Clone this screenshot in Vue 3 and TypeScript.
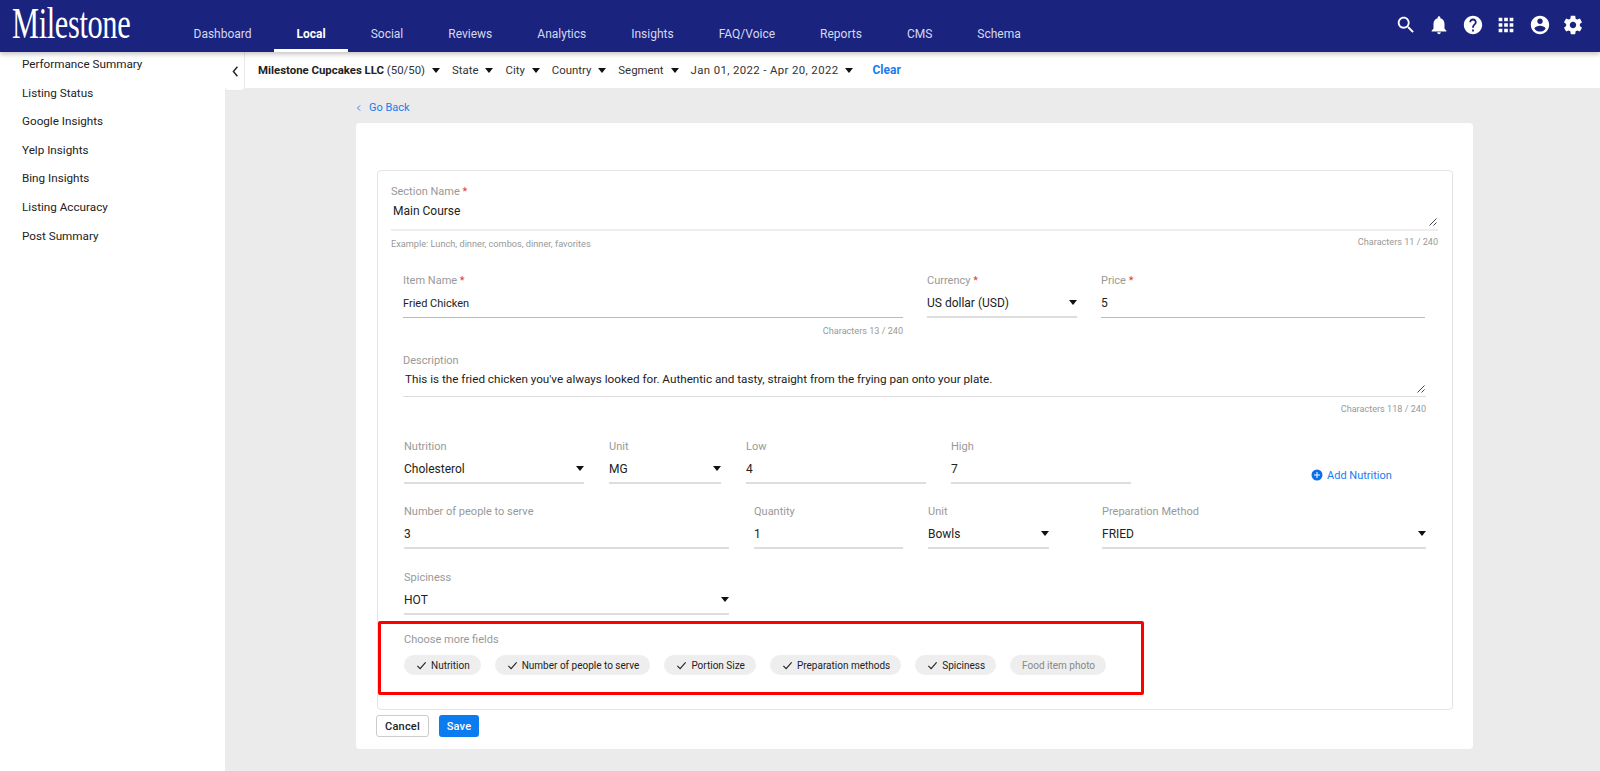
<script setup lang="ts">
const nav = ['Dashboard','Local','Social','Reviews','Analytics','Insights','FAQ/Voice','Reports','CMS','Schema']
const side = ['Performance Summary','Listing Status','Google Insights','Yelp Insights','Bing Insights','Listing Accuracy','Post Summary']
const filters = ['State','City','Country','Segment']
const icons: string[] = [
'M15.5 14h-.79l-.28-.27C15.41 12.59 16 11.11 16 9.5 16 5.91 13.09 3 9.5 3S3 5.91 3 9.5 5.91 16 9.5 16c1.61 0 3.09-.59 4.23-1.57l.27.28v.79l5 4.99L20.49 19l-4.99-5zm-6 0C7.01 14 5 11.99 5 9.5S7.01 5 9.5 5 14 7.01 14 9.5 11.99 14 9.5 14z',
'M12 22c1.1 0 2-.9 2-2h-4c0 1.1.89 2 2 2zm6-6v-5c0-3.07-1.64-5.64-4.5-6.32V4c0-.83-.67-1.5-1.5-1.5s-1.5.67-1.5 1.5v.68C7.63 5.36 6 7.92 6 11v5l-2 2v1h16v-1l-2-2z',
'M12 2C6.48 2 2 6.48 2 12s4.48 10 10 10 10-4.48 10-10S17.52 2 12 2zm1 17h-2v-2h2v2zm2.07-7.75l-.9.92C13.45 12.9 13 13.5 13 15h-2v-.5c0-1.1.45-2.1 1.17-2.83l1.24-1.26c.37-.36.59-.86.59-1.41 0-1.1-.9-2-2-2s-2 .9-2 2H8c0-2.21 1.79-4 4-4s4 1.79 4 4c0 .88-.36 1.68-.93 2.25z',
'M4 8h4V4H4v4zm6 12h4v-4h-4v4zm-6 0h4v-4H4v4zm0-6h4v-4H4v4zm6 0h4v-4h-4v4zm6-10v4h4V4h-4zm-6 4h4V4h-4v4zm6 6h4v-4h-4v4zm0 6h4v-4h-4v4z',
'M12 2C6.48 2 2 6.48 2 12s4.48 10 10 10 10-4.48 10-10S17.52 2 12 2zm0 3c1.66 0 3 1.34 3 3s-1.34 3-3 3-3-1.34-3-3 1.34-3 3-3zm0 14.2c-2.5 0-4.71-1.28-6-3.22.03-1.99 4-3.08 6-3.08 1.99 0 5.97 1.09 6 3.08-1.29 1.94-3.5 3.22-6 3.22z',
'M19.43 12.98c.04-.32.07-.64.07-.98s-.03-.66-.07-.98l2.11-1.65c.19-.15.24-.42.12-.64l-2-3.46c-.12-.22-.39-.3-.61-.22l-2.49 1c-.52-.4-1.08-.73-1.69-.98l-.38-2.65C14.46 2.18 14.25 2 14 2h-4c-.25 0-.46.18-.49.42l-.38 2.65c-.61.25-1.17.59-1.69.98l-2.49-1c-.23-.09-.49 0-.61.22l-2 3.46c-.13.22-.07.49.12.64l2.11 1.65c-.04.32-.07.65-.07.98s.03.66.07.98l-2.11 1.65c-.19.15-.24.42-.12.64l2 3.46c.12.22.39.3.61.22l2.49-1c.52.4 1.08.73 1.69.98l.38 2.65c.03.24.24.42.49.42h4c.25 0 .46-.18.49-.42l.38-2.65c.61-.25 1.17-.59 1.69-.98l2.49 1c.23.09.49 0 .61-.22l2-3.46c.12-.22.07-.49-.12-.64l-2.11-1.65zM12 15.5c-1.93 0-3.5-1.57-3.5-3.5s1.57-3.5 3.5-3.5 3.5 1.57 3.5 3.5-1.57 3.5-3.5 3.5z'
]
interface Field { label: string; value: string; select?: boolean }
const nutrition: Field[] = [
  { label: 'Nutrition', value: 'Cholesterol', select: true },
  { label: 'Unit', value: 'MG', select: true },
  { label: 'Low', value: '4' },
  { label: 'High', value: '7' }
]
const people: Field[] = [
  { label: 'Number of people to serve', value: '3' },
  { label: 'Quantity', value: '1' },
  { label: 'Unit', value: 'Bowls', select: true },
  { label: 'Preparation Method', value: 'FRIED', select: true }
]
const chips = [
  { t: 'Nutrition', on: true },
  { t: 'Number of people to serve', on: true },
  { t: 'Portion Size', on: true },
  { t: 'Preparation methods', on: true },
  { t: 'Spiciness', on: true },
  { t: 'Food item photo', on: false }
]
</script>

<template>
  <div class="app">
    <header class="top">
      <div class="logo">Milestone</div>
      <nav class="nav">
        <a v-for="n in nav" :key="n" class="nav-item" :class="{ active: n === 'Local' }">{{ n }}</a>
      </nav>
      <div class="icons">
        <svg v-for="(d, i) in icons" :key="i" viewBox="0 0 24 24" class="top-icon"><path :d="d" /></svg>
      </div>
    </header>
    <div class="body">
      <aside class="side">
        <a v-for="s in side" :key="s" class="side-item">{{ s }}</a>
      </aside>
      <main class="main">
        <div class="filters">
          <div class="collapse">
            <svg viewBox="0 0 10 16" width="8" height="13"><path d="M8 2 L3 8 L8 14" fill="none" stroke="#222" stroke-width="1.8" /></svg>
          </div>
          <span class="f-text org"><b>Milestone Cupcakes LLC</b> (50/50)</span><i class="caret f-caret"></i>
          <template v-for="f in filters" :key="f">
            <span class="f-text">{{ f }}</span><i class="caret f-caret"></i>
          </template>
          <span class="f-text date">Jan 01, 2022 - Apr 20, 2022</span><i class="caret f-caret"></i>
          <a class="clear">Clear</a>
        </div>
        <div class="content">
          <a class="back"><svg viewBox="0 0 8 10" width="6" height="8"><path d="M5.5 1.5 L2 5 L5.5 8.5" fill="none" stroke="#1a7cf0" stroke-width="1.2" /></svg>Go Back</a>
          <section class="card">
            <div class="panel">
              <div class="section">
                <div class="label">Section Name <em>*</em></div>
                <div class="area">Main Course<svg class="grip" viewBox="0 0 8 8" width="8" height="8"><path d="M0.5 7.5 L7.5 0.5 M4.5 7.5 L7.5 4.5" stroke="#444" stroke-width="1" /></svg></div>
                <div class="hints"><span>Example: Lunch, dinner, combos, dinner, favorites</span><span class="count">Characters 11 / 240</span></div>
              </div>
              <div class="inner">
                <div class="row row-item">
                  <div class="field">
                    <div class="label">Item Name <em>*</em></div>
                    <div class="value dark small">Fried Chicken</div>
                    <div class="count tail tail-item">Characters 13 / 240</div>
                  </div>
                  <div class="field">
                    <div class="label">Currency <em>*</em></div>
                    <div class="value">US dollar (USD)<i class="caret"></i></div>
                  </div>
                  <div class="field">
                    <div class="label">Price <em>*</em></div>
                    <div class="value dark">5</div>
                  </div>
                </div>
                <div class="desc">
                  <div class="label">Description</div>
                  <div class="desc-area">This is the fried chicken you've always looked for. Authentic and tasty, straight from the frying pan onto your plate.<svg class="grip" viewBox="0 0 8 8" width="8" height="8"><path d="M0.5 7.5 L7.5 0.5 M4.5 7.5 L7.5 4.5" stroke="#444" stroke-width="1" /></svg></div>
                  <div class="count tail tail-desc">Characters 118 / 240</div>
                </div>
                <div class="row row-nutrition">
                  <div v-for="f in nutrition" :key="f.label" class="field">
                    <div class="label">{{ f.label }}</div>
                    <div class="value">{{ f.value }}<i v-if="f.select" class="caret"></i></div>
                  </div>
                  <a class="add">
                    <svg viewBox="0 0 24 24" width="12" height="12"><path fill="#0b6fe8" d="M12 1a11 11 0 1 0 0 22 11 11 0 0 0 0-22zm6 12h-5v5h-2v-5H6v-2h5V6h2v5h5v2z" /></svg>
                    Add Nutrition
                  </a>
                </div>
                <div class="row row-people">
                  <div v-for="f in people" :key="f.label" class="field">
                    <div class="label">{{ f.label }}</div>
                    <div class="value">{{ f.value }}<i v-if="f.select" class="caret"></i></div>
                  </div>
                </div>
                <div class="row row-spice">
                  <div class="field">
                    <div class="label">Spiciness</div>
                    <div class="value">HOT<i class="caret"></i></div>
                  </div>
                </div>
              </div>
              <div class="more">
                <div class="label">Choose more fields</div>
                <div class="chips">
                  <span v-for="c in chips" :key="c.t" class="chip" :class="{ off: !c.on }">
                    <svg v-if="c.on" viewBox="0 0 12 12" width="11" height="11"><path d="M1.5 6.5 L4.5 9.5 L10.5 2.5" fill="none" stroke="#222" stroke-width="1.2" /></svg>
                    {{ c.t }}
                  </span>
                </div>
              </div>
            </div>
            <div class="actions">
              <button class="btn cancel">Cancel</button>
              <button class="btn save">Save</button>
            </div>
          </section>
        </div>
      </main>
    </div>
  </div>
</template>

<style>
html, body { margin: 0; background: #ebebeb; }
</style>

<style scoped>
.app { width: 1600px; height: 771px; overflow: hidden; display: flex; flex-direction: column; font-family: Roboto, "Liberation Sans", sans-serif; color: #222; background: #ebebeb; }
.top { height: 52px; flex: none; background: #1a237e; display: flex; align-items: stretch; box-shadow: 0 2px 5px rgba(0,0,0,.25); position: relative; z-index: 3; }
.logo { width: 171px; flex: none; padding-left: 12px; box-sizing: border-box; font-family: "Liberation Serif", serif; color: #fff; font-size: 44px; line-height: 48px; transform: scaleX(.69); transform-origin: 12px 0; white-space: nowrap; letter-spacing: -.5px; }
.nav { display: flex; align-items: stretch; }
.nav-item { padding: 18px 22.5px 0; color: #d6d9ee; font-size: 12px; display: flex; align-items: center; border-bottom: 3px solid transparent; box-sizing: border-box; }
.nav-item.active { color: #fff; font-weight: 700; border-bottom-color: #fff; }
.icons { margin-left: auto; display: flex; align-items: center; gap: 11.5px; padding: 0 16px 2px 0; }
.top-icon { width: 22px; height: 22px; fill: #fff; }
.body { flex: 1; display: flex; min-height: 0; }
.side { width: 225px; flex: none; background: #fff; display: flex; flex-direction: column; box-sizing: border-box; padding-left: 22px; }
.side-item { height: 28.6px; flex: none; line-height: 25px; font-size: 11.7px; color: #222; }
.main { flex: 1; min-width: 0; display: flex; flex-direction: column; }
.filters { height: 36px; flex: none; background: #fff; display: flex; align-items: center; position: relative; padding-left: 33px; box-sizing: border-box; z-index: 2; }
.collapse { position: absolute; left: 0; top: 0; width: 20px; height: 39px; background: #fff; border-radius: 0 0 4px 4px; border-right: 1px solid #e8e8e8; border-bottom: 1px solid #e8e8e8; display: flex; align-items: center; justify-content: center; box-sizing: border-box; }
.f-text { color: #333; font-size: 11.4px; white-space: nowrap; }
.f-text.date { letter-spacing: .37px; }
.org b { font-weight: 700; color: #222; }
.caret { display: inline-block; width: 0; height: 0; border-left: 4.5px solid transparent; border-right: 4.5px solid transparent; border-top: 5px solid #111; }
.f-caret { margin: 0 12px 0 7px; border-left-width: 4px; border-right-width: 4px; }
.clear { color: #1a7cf0; font-weight: 700; font-size: 12px; margin-left: 7px; }
.content { flex: 1; min-height: 0; padding: 0 0 0 131px; width: 1117px; }
.back { display: flex; align-items: center; gap: 7px; height: 35px; box-sizing: border-box; padding-top: 4px; color: #1a7cf0; font-size: 11px; }
.card { background: #fff; border-radius: 4px; width: 1117px; height: 626px; box-sizing: border-box; padding: 47px 20px 0 21px; }
.panel { border: 1px solid #e4e4e4; border-radius: 4px; height: 540px; box-sizing: border-box; padding: 13px 14px 0 13px; display: flex; flex-direction: column; }
.label { font-size: 11px; line-height: 16px; color: #999; }
.label em { color: #e53935; font-style: normal; }
.area { border-bottom: 2px solid #eee; padding: 2px 0 0 2px; font-size: 12px; line-height: 18px; color: #222; position: relative; box-sizing: content-box; height: 27px; }
.grip { position: absolute; right: 1px; bottom: 3px; }
.hints { display: flex; justify-content: space-between; font-size: 9.2px; color: #999; height: 20px; line-height: 26px; }
.count { font-size: 9.1px; color: #999; line-height: 20px; }
.hints .count { line-height: 22px; }
.inner { padding: 0 12px 0 12px; margin-top: 22px; }
.row { display: grid; column-gap: 24px; }
.row-item { grid-template-columns: 500px 150px 324px; height: 80px; }
.row-nutrition { grid-template-columns: 180px 112px 180px 180px 1fr; column-gap: 25px; height: 65px; padding-left: 1px; }
.row-people { grid-template-columns: 325px 149px 149px 324px; column-gap: 25px; height: 66px; padding-left: 1px; }
.row-people .field:nth-child(3) { width: 121px; }
.row-spice { grid-template-columns: 325px; height: 51px; padding-left: 1px; }
.field { min-width: 0; }
.value { height: 29px; box-sizing: border-box; border-bottom: 2px solid #ddd; display: flex; align-items: center; justify-content: space-between; font-size: 12px; color: #222; }
.value.dark { border-bottom: 1px solid #bbb; }
.value.small { font-size: 11px; }
.tail { text-align: right; }
.tail-item { margin-top: 3px; }
.tail-desc { margin-top: 2px; }
.desc { height: 86px; }
.desc-area { position: relative; height: 28px; border-bottom: 1px solid #ddd; font-size: 11.7px; line-height: 18px; padding: 1px 0 0 2px; box-sizing: border-box; color: #222; }
.add { align-self: start; margin-top: 28px; display: inline-flex; align-items: center; gap: 4px; color: #1a7cf0; font-size: 11px; margin-left: 155px; white-space: nowrap; height: 16px; }
.more { width: 766px; height: 74px; box-sizing: border-box; border: 3px solid #f00; border-radius: 2px; margin: 0 0 0 -13px; padding: 8px 0 0 23px; flex: none; }
.chips { display: flex; gap: 14px; margin-top: 7px; }
.chip { height: 20px; border-radius: 10px; background: #eee; display: inline-flex; align-items: center; gap: 4px; padding: 0 11px 0 12px; font-size: 10px; color: #222; white-space: nowrap; }
.chip.off { color: #888; }
.actions { display: flex; gap: 10px; margin-top: 5px; margin-left: -1px; }
.btn { height: 22px; border-radius: 3px; font-family: inherit; font-size: 11px; font-weight: 500; padding: 0; letter-spacing: .2px; cursor: pointer; }
.cancel { width: 53px; background: #fff; color: #222; border: 1px solid #ccc; }
.save { width: 40px; background: #0b7bf0; color: #fff; border: 0; }
</style>
